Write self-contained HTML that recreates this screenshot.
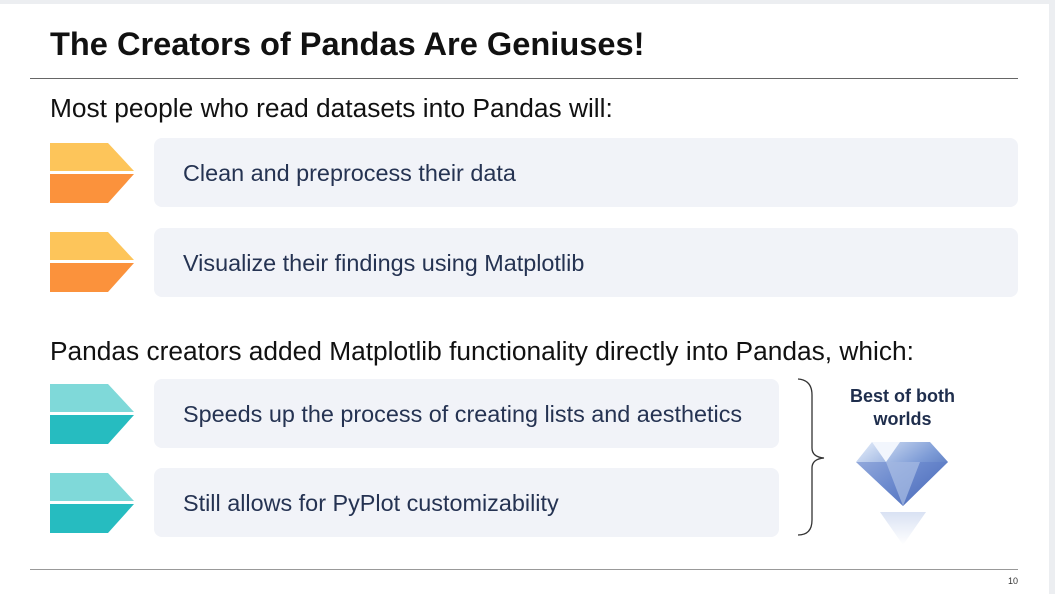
<!DOCTYPE html><html><head><style>
body{margin:0;width:1055px;height:594px;background:#fff;position:relative;overflow:hidden;font-family:"Liberation Sans",Arial,sans-serif}
.a{position:absolute}
.box{position:absolute;background:#f1f3f8;border-radius:8px;left:154px;height:69px;}
.t{position:absolute;left:183px;font-size:23.4px;color:#253352;}
h1{position:absolute;margin:0;left:50px;top:25px;font-size:32.6px;font-weight:bold;color:#111}
.s{position:absolute;left:50px;font-size:26.3px;color:#111}
</style></head><body>
<div class="a" style="left:0;top:0;width:1055px;height:4px;background:#eceef1"></div>
<div class="a" style="right:0;top:0;width:6px;height:594px;background:#eceef1"></div>
<h1>The Creators of Pandas Are Geniuses!</h1>
<div class="a" style="left:30px;top:78px;width:988px;height:1px;background:#666"></div>
<div class="s" style="top:93px">Most people who read datasets into Pandas will:</div>
<div class="box" style="top:138px;width:864px"></div>
<div class="box" style="top:228px;width:864px"></div>
<div class="t" style="top:160px">Clean and preprocess their data</div>
<div class="t" style="top:250px">Visualize their findings using Matplotlib</div>
<div class="s" style="top:336px">Pandas creators added Matplotlib functionality directly into Pandas, which:</div>
<div class="box" style="top:379px;width:625px"></div>
<div class="box" style="top:468px;width:625px"></div>
<div class="t" style="top:401px">Speeds up the process of creating lists and aesthetics</div>
<div class="t" style="top:490px">Still allows for PyPlot customizability</div>
<svg class="a" style="left:0;top:0" width="1055" height="594">
<g><polygon points="50,143 108,143 134,171 50,171" fill="#fdc55a"/><polygon points="50,174 134,174 108,203 50,203" fill="#fb923c"/></g>
<g transform="translate(0,89)"><polygon points="50,143 108,143 134,171 50,171" fill="#fdc55a"/><polygon points="50,174 134,174 108,203 50,203" fill="#fb923c"/></g>
<g transform="translate(0,241)"><polygon points="50,143 108,143 134,171 50,171" fill="#7fd9d9"/><polygon points="50,174 134,174 108,203 50,203" fill="#26bcc0"/></g>
<g transform="translate(0,330)"><polygon points="50,143 108,143 134,171 50,171" fill="#7fd9d9"/><polygon points="50,174 134,174 108,203 50,203" fill="#26bcc0"/></g>
<path d="M798,379 Q812,380 812,395 L812,448 Q812,457 824,458 Q812,459 812,468 L812,520 Q812,535 798,535" fill="none" stroke="#333" stroke-width="1.3"/>
<defs><linearGradient id="d" x1="0" y1="0" x2="1" y2="1"><stop offset="0" stop-color="#e8f0fb"/><stop offset=".5" stop-color="#7d9bd6"/><stop offset="1" stop-color="#2c4fa5"/></linearGradient>
<linearGradient id="r" x1="0" y1="0" x2="0" y2="1"><stop offset="0" stop-color="#c9d5ee"/><stop offset="1" stop-color="#fff"/></linearGradient></defs>
<polygon points="856,462 872,442 930,442 948,462 903,506" fill="url(#d)"/>
<polygon points="856,462 948,462 903,506" fill="#5d7cc7" opacity=".5"/>
<polygon points="872,442 900,442 886,462" fill="#f2f6fd"/>
<polygon points="886,462 920,462 903,506" fill="#b8c9ea" opacity=".6"/>
<polygon points="880,512 926,512 903,545" fill="url(#r)" opacity=".7"/>
</svg>
<div class="a" style="left:835px;top:385px;width:135px;text-align:center;font-size:18px;font-weight:bold;color:#1f2e4d;line-height:23px">Best of both<br>worlds</div>
<div class="a" style="left:30px;top:569px;width:988px;height:1px;background:#999"></div>
<div class="a" style="left:1008px;top:576px;font-size:9px;color:#333">10</div>
</body></html>
